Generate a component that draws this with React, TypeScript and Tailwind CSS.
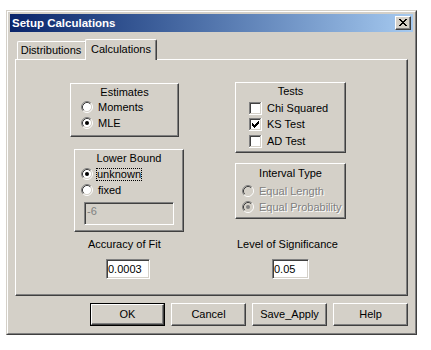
import React from "react";

const raised =
  "border border-t-white border-l-white border-r-[#404040] border-b-[#404040] shadow-[inset_-1px_-1px_0_#808080]";
const sunken =
  "border border-t-[#808080] border-l-[#808080] border-r-white border-b-white shadow-[inset_1px_1px_0_#404040,inset_-1px_-1px_0_#d4d0c8]";
const disabledText = "text-[#808080] [text-shadow:1px_1px_0_#ffffff]";

function Pixels({ rows, color, x, y }: { rows: string[]; color: string; x: number; y: number }) {
  const rects: React.ReactNode[] = [];
  rows.forEach((r, ry) => {
    r.split("").forEach((c, rx) => {
      if (c === "x") rects.push(<rect key={`${rx}-${ry}`} x={x + rx} y={y + ry} width={1} height={1} fill={color} />);
    });
  });
  return <>{rects}</>;
}

function Radio({ checked, disabled }: { checked?: boolean; disabled?: boolean }) {
  return (
    <svg width="12" height="12" viewBox="0 0 12 12" className="shrink-0">
      <circle cx="6" cy="6" r="4.5" fill={disabled ? "#d4d0c8" : "#ffffff"} />
      <path d="M2.11 9.89A5.5 5.5 0 0 1 9.89 2.11" fill="none" stroke="#808080" />
      <path d="M9.89 2.11A5.5 5.5 0 0 1 2.11 9.89" fill="none" stroke="#ffffff" />
      <path d="M2.82 9.18A4.5 4.5 0 0 1 9.18 2.82" fill="none" stroke="#404040" />
      <path d="M9.18 2.82A4.5 4.5 0 0 1 2.82 9.18" fill="none" stroke="#d4d0c8" />
      {checked && <circle cx="6" cy="6" r="2" fill={disabled ? "#808080" : "#000000"} />}
    </svg>
  );
}

function CheckBox({ checked }: { checked?: boolean }) {
  return (
    <svg width="13" height="13" viewBox="0 0 13 13" shapeRendering="crispEdges" className="shrink-0">
      <rect x="0" y="0" width="13" height="13" fill="#ffffff" />
      <rect x="0" y="0" width="12" height="1" fill="#808080" />
      <rect x="0" y="0" width="1" height="12" fill="#808080" />
      <rect x="0" y="12" width="13" height="1" fill="#ffffff" />
      <rect x="12" y="0" width="1" height="13" fill="#ffffff" />
      <rect x="1" y="1" width="10" height="1" fill="#404040" />
      <rect x="1" y="1" width="1" height="10" fill="#404040" />
      <rect x="1" y="11" width="11" height="1" fill="#d4d0c8" />
      <rect x="11" y="1" width="1" height="11" fill="#d4d0c8" />
      {checked && (
        <Pixels
          x={3}
          y={3}
          color="#000000"
          rows={["......x", ".....xx", "x...xxx", "xx.xxx.", "xxxxx..", ".xxx...", "..x...."]}
        />
      )}
    </svg>
  );
}

function Button({ label, isDefault }: { label: string; isDefault?: boolean }) {
  const inner = (
    <div className={`w-full h-full flex items-center justify-center bg-[#d4d0c8] ${raised}`}>
      <span>{label}</span>
    </div>
  );
  return (
    <div className={`w-[75px] h-[23px] ${isDefault ? "border border-black" : ""}`}>{inner}</div>
  );
}

export default function App() {
  return (
    <div className="w-[431px] h-[350px] bg-white pt-[10px] pl-[6px] font-['Liberation_Sans',Arial,sans-serif] text-[11px] leading-[13px] text-black">
      <div className="w-[411px] h-[325px] bg-[#d4d0c8] border border-t-[#d4d0c8] border-l-[#d4d0c8] border-r-[#404040] border-b-[#404040]">
        <div className="h-full border border-t-white border-l-white border-r-[#808080] border-b-[#808080] p-[2px] flex flex-col">
          {/* Title bar */}
          <div className="h-[18px] bg-linear-to-r from-[#0a246a] to-[#a6caf0] flex items-center justify-between pl-[2px] pr-[2px]">
            <span className="text-white font-bold text-[11.5px]">Setup Calculations</span>
            <div className={`w-[16px] h-[14px] bg-[#d4d0c8] ${raised}`}>
              <svg width="14" height="12" viewBox="0 0 14 12" shapeRendering="crispEdges">
                <Pixels
                  x={3}
                  y={2}
                  color="#000000"
                  rows={["xx....xx", ".xx..xx.", "..xxxx..", "...xx...", "..xxxx..", ".xx..xx.", "xx....xx"]}
                />
              </svg>
            </div>
          </div>

          {/* Body */}
          <div className="px-[5px] flex flex-col">
            {/* Tabs */}
            <div className="mt-[7px] h-[20px] flex items-end pl-[2px]">
              <div className="w-[70px] h-[18px] border-t border-l border-r border-t-white border-l-white border-r-[#404040] shadow-[inset_-1px_0_0_#808080] rounded-t-[2px] flex items-center justify-center pr-[2px]">
                Distributions
              </div>
              <div className="relative z-10 -ml-[2px] -mb-[1px] w-[72px] h-[21px] bg-[#d4d0c8] border-t border-l border-r border-t-white border-l-white border-r-[#404040] shadow-[inset_-1px_0_0_#808080] rounded-t-[2px] flex items-start justify-center pt-[3px]">
                Calculations
              </div>
            </div>

            {/* Panel */}
            <div className={`h-[237px] flex ${raised}`}>
              {/* Left column */}
              <div className="ml-[54px] w-[165px] flex flex-col items-start">
                <div className={`mt-[23px] w-[109px] h-[54px] pt-[2px] pl-[10px] ${raised}`}>
                  <div className="h-[13px] text-center -ml-[10px]">Estimates</div>
                  <div className="h-[16px] flex items-center">
                    <Radio />
                    <span className="ml-[5px]">Moments</span>
                  </div>
                  <div className="h-[16px] flex items-center">
                    <Radio checked />
                    <span className="ml-[5px]">MLE</span>
                  </div>
                </div>

                <div className={`mt-[12px] ml-[4px] w-[110px] h-[83px] pt-[2px] pl-[6px] ${raised}`}>
                  <div className="h-[13px] text-center -ml-[6px]">Lower Bound</div>
                  <div className="mt-[1px] h-[16px] flex items-center">
                    <Radio checked />
                    <span className="ml-[3px] px-[1px] outline outline-1 outline-dotted outline-black -outline-offset-1 leading-[13px]">
                      unknown
                    </span>
                  </div>
                  <div className="h-[16px] flex items-center">
                    <Radio />
                    <span className="ml-[5px]">fixed</span>
                  </div>
                  <div className={`mt-[4px] ml-[3px] w-[90px] h-[23px] bg-[#d4d0c8] pl-[2px] pt-[2px] text-[#808080] ${sunken}`}>
                    -6
                  </div>
                </div>

                <div className="mt-[6px] ml-[18px] h-[13px]">Accuracy of Fit</div>
                <div className={`mt-[8px] ml-[36px] w-[44px] h-[20px] bg-white flex items-center pl-[1px] ${sunken}`}>
                  0.0003
                </div>
              </div>

              {/* Right column */}
              <div className="flex flex-col items-start">
                <div className={`mt-[22px] w-[111px] h-[71px] pt-[2px] pl-[13px] ${raised}`}>
                  <div className="h-[13px] text-center -ml-[13px]">Tests</div>
                  <div className="mt-[2px] h-[16.5px] flex items-center">
                    <CheckBox />
                    <span className="ml-[5px]">Chi Squared</span>
                  </div>
                  <div className="h-[16.5px] flex items-center">
                    <CheckBox checked />
                    <span className="ml-[5px]">KS Test</span>
                  </div>
                  <div className="h-[16.5px] flex items-center">
                    <CheckBox />
                    <span className="ml-[5px]">AD Test</span>
                  </div>
                </div>

                <div className={`mt-[10px] w-[111px] h-[56px] pt-[3px] pl-[6px] ${raised}`}>
                  <div className="h-[13px] text-center -ml-[6px]">Interval Type</div>
                  <div className="mt-[3px] h-[16px] flex items-center">
                    <Radio disabled />
                    <span className={`ml-[5px] ${disabledText}`}>Equal Length</span>
                  </div>
                  <div className="h-[16px] flex items-center">
                    <Radio disabled checked />
                    <span className={`ml-[5px] ${disabledText}`}>Equal Probability</span>
                  </div>
                </div>

                <div className="mt-[19px] ml-[2px] h-[13px]">Level of Significance</div>
                <div className={`mt-[8px] ml-[37px] w-[37px] h-[20px] bg-white flex items-center pl-[1px] ${sunken}`}>
                  0.05
                </div>
              </div>
            </div>

            {/* Buttons */}
            <div className="mt-[7px] flex justify-end gap-[6px]">
              <Button label="OK" isDefault />
              <Button label="Cancel" />
              <Button label="Save_Apply" />
              <Button label="Help" />
            </div>
          </div>
        </div>
      </div>
    </div>
  );
}
